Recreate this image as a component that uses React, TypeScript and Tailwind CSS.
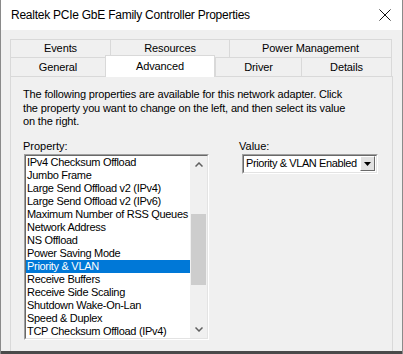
import React from "react";

const items = [
  "IPv4 Checksum Offload",
  "Jumbo Frame",
  "Large Send Offload v2 (IPv4)",
  "Large Send Offload v2 (IPv6)",
  "Maximum Number of RSS Queues",
  "Network Address",
  "NS Offload",
  "Power Saving Mode",
  "Priority & VLAN",
  "Receive Buffers",
  "Receive Side Scaling",
  "Shutdown Wake-On-Lan",
  "Speed & Duplex",
  "TCP Checksum Offload (IPv4)",
];

function Tab({ label, w, h, last }: { label: string; w: number; h: number; last?: boolean }) {
  return (
    <div
      className={`flex items-center justify-center border-t border-l border-[#d9d9d9] ${last ? "border-r" : ""}`}
      style={{ width: w, height: h }}
    >
      {label}
    </div>
  );
}

export default function App() {
  return (
    <div className="w-[403px] h-[354px] overflow-hidden bg-[#f0f0f0] border-x border-[#8a8a8a] flex flex-col font-['Liberation_Sans',Arial,sans-serif] text-[11px] text-black">
      {/* title bar */}
      <div className="h-[30px] shrink-0 bg-white flex items-center justify-between pl-[10px] pr-[10px]">
        <span className="text-[12px] tracking-[-0.25px]">Realtek PCIe GbE Family Controller Properties</span>
        <svg width="12" height="12" viewBox="0 0 12 12" className="mr-[1px]">
          <path d="M0.5 0.5 L11.5 11.5 M11.5 0.5 L0.5 11.5" stroke="#111" strokeWidth="1" />
        </svg>
      </div>

      <div className="flex-1 flex flex-col pl-[9px] pr-[9px] pt-[9px]">
        {/* tabs */}
        <div className="flex tracking-[-0.1px]">
          <Tab label="Events" w={100} h={18} />
          <Tab label="Resources" w={119} h={18} />
          <Tab label="Power Management" w={163} h={18} last />
        </div>
        <div className="flex tracking-[-0.1px]">
          <Tab label="General" w={95} h={19} />
          <div className="relative w-[110px] h-[19px]">
            <div className="absolute left-0 right-0 top-[-2px] bottom-[-1px] z-10 bg-white border-x border-t border-[#d9d9d9] flex items-start justify-center pt-[2px]">
              Advanced
            </div>
          </div>
          <Tab label="Driver" w={86} h={19} />
          <Tab label="Details" w={91} h={19} last />
        </div>

        {/* panel */}
        <div className="flex-1 border-x border-t border-[#d9d9d9] bg-[#f0f0f0] pl-[12px] pt-[11px]">
          <p className="leading-[13.5px] tracking-[-0.15px]">
            The following properties are available for this network adapter. Click
            <br />
            the property you want to change on the left, and then select its value
            <br />
            on the right.
          </p>

          <div className="flex mt-[10px]">
            <div className="w-[185px] ml-[1px] flex flex-col">
              <div className="leading-[14px] -ml-[1px]">Property:</div>
              <div className="mt-[1px] h-[186px] border border-t-[#a0a0a0] border-l-[#a0a0a0] border-r-white border-b-white">
                <div className="h-full flex bg-white border border-t-[#696969] border-l-[#696969] border-r-[#e3e3e3] border-b-[#e3e3e3]">
                  <div className="flex-1 flex flex-col tracking-[-0.3px]">
                    {items.map((it) => {
                      const sel = it === "Priority & VLAN";
                      return (
                        <div
                          key={it}
                          className={`h-[13px] leading-[13px] pl-[1px] whitespace-nowrap ${sel ? "bg-[#0078d7] text-white" : ""}`}
                        >
                          {it}
                        </div>
                      );
                    })}
                  </div>
                  <div className="w-[17px] bg-[#f0f0f0] flex flex-col">
                    <div className="h-[17px] flex items-center justify-center">
                      <svg width="8" height="5" viewBox="0 0 8 5">
                        <path d="M0.5 4.5 L4 1 L7.5 4.5" fill="none" stroke="#606060" strokeWidth="1.5" />
                      </svg>
                    </div>
                    <div className="flex-1 px-[1px] pt-[41px]">
                      <div className="h-[71px] bg-[#cdcdcd]" />
                    </div>
                    <div className="h-[17px] flex items-center justify-center">
                      <svg width="8" height="5" viewBox="0 0 8 5">
                        <path d="M0.5 0.5 L4 4 L7.5 0.5" fill="none" stroke="#606060" strokeWidth="1.5" />
                      </svg>
                    </div>
                  </div>
                </div>
              </div>
            </div>

            <div className="ml-[30px] flex flex-col">
              <div className="leading-[14px]">Value:</div>
              <div className="mt-[1px] ml-[3px] w-[136px] h-[20px] border border-t-[#a0a0a0] border-l-[#a0a0a0] border-r-white border-b-white">
                <div className="h-full flex items-center bg-white border border-t-[#696969] border-l-[#696969] border-r-[#e3e3e3] border-b-[#e3e3e3] pl-[2px] pr-[1px]">
                  <span className="flex-1 whitespace-nowrap tracking-[-0.4px]">Priority &amp; VLAN Enabled</span>
                  <div className="w-[15px] h-[15px] bg-[#e1e1e1] border border-t-white border-l-white border-r-[#696969] border-b-[#696969] flex items-center justify-center">
                    <svg width="7" height="4" viewBox="0 0 7 4">
                      <path d="M0 0 L7 0 L3.5 4 Z" fill="#000" />
                    </svg>
                  </div>
                </div>
              </div>
            </div>
          </div>
        </div>
      </div>
      <div className="h-[3px] shrink-0 bg-[#4a4a4a]" />
    </div>
  );
}
